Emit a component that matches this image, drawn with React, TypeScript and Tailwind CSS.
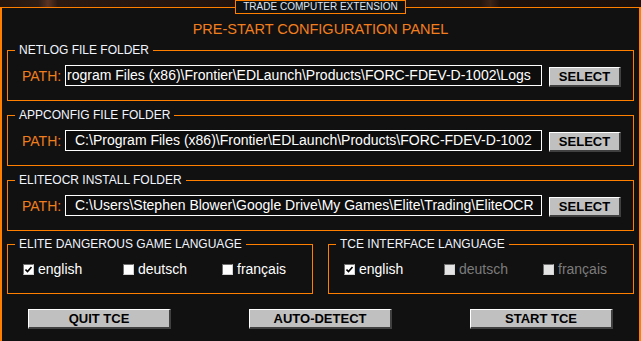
import React from 'react';

const ORANGE = 'border-[#ff8000]';

const PathBox: React.FC<{ label: string; value: string; scrolled?: boolean }> = ({ label, value, scrolled }) => (
  <fieldset className={`min-w-0 border ${ORANGE}`}>
    <legend className="ml-[7px] px-[4px] text-[12px] leading-[14px] text-[#f2f6ff]">{label}</legend>
    <div className="flex items-start pt-[8px] pb-[13px] pl-[14px]">
      <span className="w-[43px] pt-[1px] text-[14px] leading-[21px] text-[#f07d1e]">PATH:</span>
      <div
        className={`h-[21px] w-[477px] overflow-hidden whitespace-nowrap border border-white bg-[#0d0d0d] text-[14px] leading-[19px] text-white ${
          scrolled ? 'pl-[1px]' : 'pl-[9px]'
        }`}
      >
        {value}
      </div>
      <button
        type="button"
        className="ml-[7px] mt-[2px] h-[20px] w-[72px] border-l border-t border-b-2 border-r-2 border-l-white border-t-white border-b-[#404040] border-r-[#404040] bg-[#c0c0c0] text-[13px] font-bold leading-[16px] text-black"
      >
        SELECT
      </button>
    </div>
  </fieldset>
);

const Check: React.FC<{ label: string; checked?: boolean; disabled?: boolean; w: string }> = ({
  label,
  checked,
  disabled,
  w,
}) => (
  <label className={`flex shrink-0 items-center ${w}`}>
    <span
      className={`flex h-[11px] w-[11px] items-center justify-center border border-l-[#6e6e6e] border-t-[#6e6e6e] border-r-[#d4d4d4] border-b-[#d4d4d4] ${
        disabled ? 'bg-[#e4e4e4]' : 'bg-white'
      }`}
    >
      {checked && (
        <svg width="7" height="7" viewBox="0 0 7 7">
          <path d="M0.5 3.5 L2.5 5.5 L6.5 1" stroke="#000" strokeWidth="1.6" fill="none" />
        </svg>
      )}
    </span>
    <span className={`ml-[4px] text-[14px] leading-[17px] ${disabled ? 'text-[#7c7c7c]' : 'text-white'}`}>{label}</span>
  </label>
);

const LangBox: React.FC<{ label: string; locked?: boolean }> = ({ label, locked }) => (
  <fieldset className={`w-[306px] min-w-0 border ${ORANGE}`}>
    <legend className="ml-[7px] px-[4px] text-[12px] leading-[14px] text-[#f2f6ff]">{label}</legend>
    <div className="mt-[10px] mb-[15px] flex h-[17px] pl-[15px]">
      <Check label="english" checked w="w-[100px]" />
      <Check label="deutsch" disabled={locked} w="w-[99px]" />
      <Check label="français" disabled={locked} w="w-[76px]" />
    </div>
  </fieldset>
);

const BigButton: React.FC<{ children: React.ReactNode }> = ({ children }) => (
  <button
    type="button"
    className="h-[20px] w-[143px] border-l border-t border-b-2 border-r-2 border-l-white border-t-white border-b-[#404040] border-r-[#404040] bg-[#c0c0c0] text-[13px] font-bold leading-[16px] text-black"
  >
    {children}
  </button>
);

export default function App() {
  return (
    <div className="relative h-[341px] w-[641px] overflow-hidden bg-[#111111] font-['Liberation_Sans',Arial,sans-serif]">
      <div className="h-[7px] bg-[linear-gradient(90deg,#24160f_0%,#2c1d17_6%,#5a3322_7.5%,#2a1913_9%,#1f120e_40%,#23150f_75%,#3a2318_76.5%,#1d110d_78%,#1c100d_100%)]" />

      <div className={`h-[334px] border-t border-l-2 border-r-2 ${ORANGE} px-[5px]`}>
        <h1 className="mt-[13px] text-center text-[14.5px] font-normal leading-[17px] text-[#f27e1e]">
          PRE-START CONFIGURATION PANEL
        </h1>

        <div className="mt-[5px] flex flex-col gap-[7px]">
          <PathBox
            label="NETLOG FILE FOLDER"
            value="rogram Files (x86)\Frontier\EDLaunch\Products\FORC-FDEV-D-1002\Logs"
            scrolled
          />
          <PathBox
            label="APPCONFIG FILE FOLDER"
            value="C:\Program Files (x86)\Frontier\EDLaunch\Products\FORC-FDEV-D-1002"
          />
          <PathBox
            label="ELITEOCR INSTALL FOLDER"
            value="C:\Users\Stephen Blower\Google Drive\My Games\Elite\Trading\EliteOCR"
          />
          <div className="-mt-[1px] flex gap-[15px]">
            <LangBox label="ELITE DANGEROUS GAME LANGUAGE" />
            <LangBox label="TCE INTERFACE LANGUAGE" locked />
          </div>
        </div>

        <div className="mt-[15px] flex justify-between px-[21px]">
          <BigButton>QUIT TCE</BigButton>
          <BigButton>AUTO-DETECT</BigButton>
          <BigButton>START TCE</BigButton>
        </div>
      </div>

      <div className="absolute left-[235px] top-0 flex h-[14px] w-[171px] items-center justify-center border border-[#ff8000] bg-[#111111] text-[10px] leading-[12px] text-[#dbe7f5]">
        TRADE COMPUTER EXTENSION
      </div>
    </div>
  );
}
